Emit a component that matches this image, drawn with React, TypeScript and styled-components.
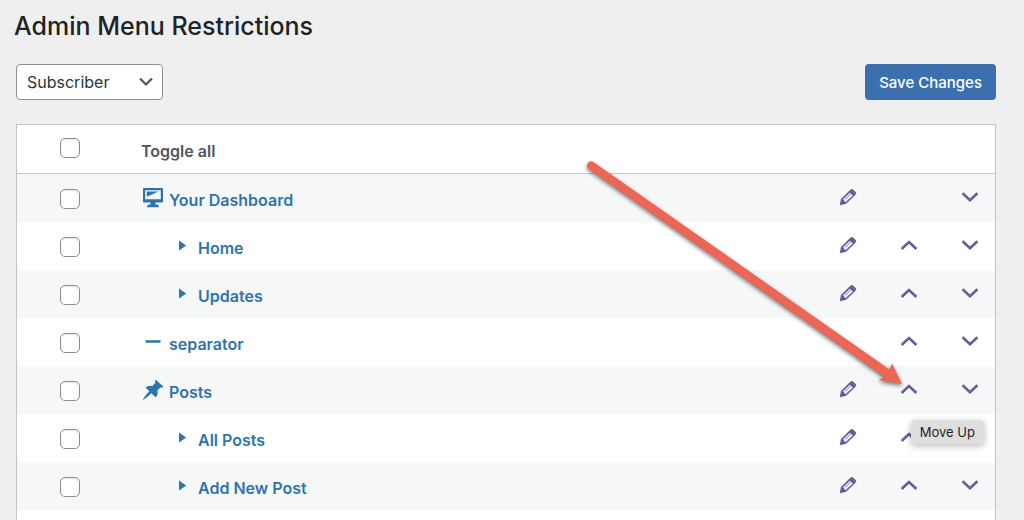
import React from 'react';
import styled, { createGlobalStyle, css } from 'styled-components';

const GlobalStyle = createGlobalStyle`
  * { box-sizing: border-box; }
  body {
    margin: 0;
    background: #efefef;
    color: #2c3338;
    font-family: Inter, "Liberation Sans", sans-serif;
    font-size: 16px;
  }
`;

const Page = styled.main`
  display: flex;
  flex-direction: column;
  height: 100vh;
  padding: 8px 28px 0 16px;
  overflow: hidden;
`;

const Title = styled.h1`
  margin: 0 0 0 -2px;
  padding-top: 1px;
  font-size: 25px;
  line-height: 35px;
  font-weight: 500;
  color: #1d2327;
`;

const Toolbar = styled.div`
  display: flex;
  justify-content: space-between;
  align-items: center;
  padding: 20px 0 24px;
`;

const SelectWrap = styled.label`
  position: relative;
  display: block;
  width: 147px;
  height: 36px;
`;

const RoleSelect = styled.select`
  appearance: none;
  width: 100%;
  height: 100%;
  padding: 0 36px 0 10px;
  border: 1px solid #8c8f94;
  border-radius: 4px;
  background: #fff;
  color: #2c3338;
  font: inherit;
  font-size: 16px;
`;

const SelectArrow = styled.svg`
  position: absolute;
  right: 10px;
  top: 13px;
  pointer-events: none;
`;

const SaveButton = styled.button`
  height: 36px;
  padding: 0 14px;
  border: 0;
  border-radius: 4px;
  background: #3b6fad;
  color: #fff;
  font: inherit;
  font-size: 15px;
  font-weight: 500;
  white-space: nowrap;
`;

const Card = styled.section`
  position: relative;
  flex: 1 0 auto;
  border: 1px solid #c3c4c7;
  border-bottom: 0;
  background: #fff;
`;

const MenuTable = styled.table`
  width: 100%;
  table-layout: fixed;
  border-collapse: separate;
  border-spacing: 0;
`;

const Row = styled.tr<{ $striped?: boolean }>`
  height: 48px;
  background: ${(p) => (p.$striped ? '#f6f8f7' : '#fff')};
`;

const headLine = css`
  height: 49px;
  border-bottom: 1px solid #c8cbce;
`;

const CheckCell = styled.td<{ $head?: boolean }>`
  width: 106px;
  padding: 2px 0 0;
  line-height: 0;
  text-align: center;
  vertical-align: middle;
  ${(p) => p.$head && headLine}
  ${(p) => p.$head && 'padding: 0 0 2px;'}
`;

const Check = styled.input`
  appearance: none;
  width: 20px;
  height: 20px;
  margin: 0;
  border: 1px solid #8c8f94;
  border-radius: 5px;
  background: #fff;
  box-shadow: inset 0 1px 2px rgba(0, 0, 0, 0.1);
  &:checked { background: #2f73ad; }
`;

const NameHead = styled.th`
  ${headLine}
  padding: 3px 0 0 18px;
  text-align: left;
  font-weight: 600;
  color: #50575e;
`;

const NameCell = styled.th`
  padding: 2px 0 0 18px;
  text-align: left;
  font-weight: 600;
`;

const ActionHead = styled.th<{ $last?: boolean }>`
  ${headLine}
  width: ${(p) => (p.$last ? '55px' : '61px')};
  padding: 0;
`;

const ActionCell = styled.td`
  padding: 0 0 0 21px;
  line-height: 0;
`;

const ItemLink = styled.a<{ $child?: boolean }>`
  display: flex;
  align-items: center;
  gap: ${(p) => (p.$child ? '8px' : '5px')};
  padding: 2px 0 0 ${(p) => (p.$child ? '33px' : '0')};
  color: #2f73ad;
  line-height: 24px;
  text-decoration: none;
  svg { flex: none; margin-bottom: 4px; }
`;

const IconButton = styled.button`
  width: 18px;
  height: 20px;
  padding: 0;
  border: 0;
  background: none;
  color: #675b9b;
`;

const Tooltip = styled.div`
  position: absolute;
  top: 295px;
  right: 11px;
  padding: 0 9px;
  border-radius: 4px;
  background: #dedede;
  box-shadow: 0 2px 7px rgba(0, 0, 0, 0.28);
  color: #1f1f1f;
  font-size: 13px;
  line-height: 24px;
  white-space: nowrap;
`;

const Pointer = styled.svg`
  position: absolute;
  top: 28px;
  right: 93px;
  pointer-events: none;
  overflow: visible;
  filter: drop-shadow(0 2px 2px rgba(0, 0, 0, 0.55));
`;

const Pencil = () => (
  <svg width="18" height="18" viewBox="0 0 18 18" aria-hidden="true">
    <path fill="currentColor" d="M0.7 17.3 2 10.9 11.5 1.6Q12.7 .5 14 1.5L16.6 4Q17.9 5.2 16.7 6.5L7.2 15.8Z" />
    <path d="M4 11.4 10.9 4.7 13.7 7.4 6.8 14.1 5.8 13.4Z" fill="#f8f9fb" />
    <path d="M5.6 11.900 11.800 5.900" stroke="currentColor" strokeWidth=".8" />
  </svg>
);

const Chevron = ({ up }: { up?: boolean }) => (
  <svg width="18" height="18" viewBox="0 0 18 18" fill="none" stroke="currentColor" strokeWidth="2.6" aria-hidden="true">
    <path d={up ? 'M1.6 13 9 6 16.4 13' : 'M1.6 5.2 9 12.2 16.4 5.2'} />
  </svg>
);

const MonitorIcon = () => (
  <svg width="23" height="22" viewBox="0 0 23 22" fill="currentColor" aria-hidden="true">
    <path fillRule="evenodd" d="M3 1H21Q22 1 22 2V14.500Q22 15.500 21 15.500H14.500V17.500H16.500Q18 18 18 20.300H6Q6 18 7.500 17.500H9.500V15.500H3Q2 15.500 2 14.500V2Q2 1 3 1ZM4.200 3.300V12.200H19.800V3.300Z" />
    <path d="M5.800 4.500H17.500L5.800 9.700Z" />
  </svg>
);

const PinIcon = () => (
  <svg width="23" height="22" viewBox="0 0 23 22" fill="currentColor" aria-hidden="true">
    <path d="M14.700.7 22.300 7.500Q21.500 9.200 19.200 8.600L16.300 11.800Q17.700 15.600 14.700 18.300L10.300 14.200Q6 18.700 1.300 21.500Q3.700 16.800 8.300 12.300L4.500 8.600Q7.500 5.800 11.400 7.100L14.300 4.100Q13.300 2 14.700.7Z" />
  </svg>
);

const DashIcon = () => (
  <svg width="23" height="22" viewBox="0 0 23 22" aria-hidden="true">
    <path d="M4.500 10.500H19.500" stroke="currentColor" strokeWidth="2.500" />
  </svg>
);

const TriangleIcon = () => (
  <svg width="16" height="16" viewBox="0 0 16 16" fill="currentColor" aria-hidden="true">
    <path d="M5 2.500 12.200 7.500 5 12.500Z" />
  </svg>
);

type Kind = 'monitor' | 'pin' | 'dash' | 'child';
const icons: Record<Kind, () => React.JSX.Element> = {
  monitor: MonitorIcon,
  pin: PinIcon,
  dash: DashIcon,
  child: TriangleIcon,
};

const items: { name: string; kind: Kind; edit?: boolean; up?: boolean }[] = [
  { name: 'Your Dashboard', kind: 'monitor', edit: true },
  { name: 'Home', kind: 'child', edit: true, up: true },
  { name: 'Updates', kind: 'child', edit: true, up: true },
  { name: 'separator', kind: 'dash', up: true },
  { name: 'Posts', kind: 'pin', edit: true, up: true },
  { name: 'All Posts', kind: 'child', edit: true, up: true },
  { name: 'Add New Post', kind: 'child', edit: true, up: true },
];

export default function App() {
  return (
    <>
      <GlobalStyle />
      <Page>
        <Title>Admin Menu Restrictions</Title>
        <Toolbar>
          <SelectWrap>
            <RoleSelect aria-label="Role" defaultValue="Subscriber">
              <option>Subscriber</option>
            </RoleSelect>
            <SelectArrow width="14" height="10" viewBox="0 0 14 10" fill="none" stroke="#50575e" strokeWidth="2.2" aria-hidden="true">
              <path d="M1 1.500 7 7.500 13 1.500" />
            </SelectArrow>
          </SelectWrap>
          <SaveButton type="button">Save Changes</SaveButton>
        </Toolbar>
        <Card>
          <MenuTable>
            <thead>
              <tr>
                <CheckCell $head><Check id="toggle-all" type="checkbox" /></CheckCell>
                <NameHead scope="col"><label htmlFor="toggle-all">Toggle all</label></NameHead>
                <ActionHead aria-label="Edit" />
                <ActionHead aria-label="Move up" />
                <ActionHead $last aria-label="Move down" />
              </tr>
            </thead>
            <tbody>
              {items.map(({ name, kind, edit, up }, i) => {
                const Icon = icons[kind];
                return (
                  <Row key={name} $striped={i % 2 === 0}>
                    <CheckCell><Check type="checkbox" aria-label={name} /></CheckCell>
                    <NameCell scope="row">
                      <ItemLink href="#" $child={kind === 'child'}><Icon />{name}</ItemLink>
                    </NameCell>
                    <ActionCell>{edit && <IconButton type="button" aria-label={`Edit ${name}`}><Pencil /></IconButton>}</ActionCell>
                    <ActionCell>{up && <IconButton type="button" aria-label={`Move ${name} up`}><Chevron up /></IconButton>}</ActionCell>
                    <ActionCell><IconButton type="button" aria-label={`Move ${name} down`}><Chevron /></IconButton></ActionCell>
                  </Row>
                );
              })}
            </tbody>
          </MenuTable>
          <Pointer width="325" height="240" viewBox="0 0 325 240" aria-hidden="true">
            <path
              fill="#ec6555"
              d="M16.400 8.900 312.500 216.500 315 210.500 325 231 301.500 227 307.500 224 11.800 15.900A4.200 4.200 0 0 1 16.400 8.900Z"
            />
          </Pointer>
          <Tooltip role="tooltip">Move Up</Tooltip>
        </Card>
      </Page>
    </>
  );
}
